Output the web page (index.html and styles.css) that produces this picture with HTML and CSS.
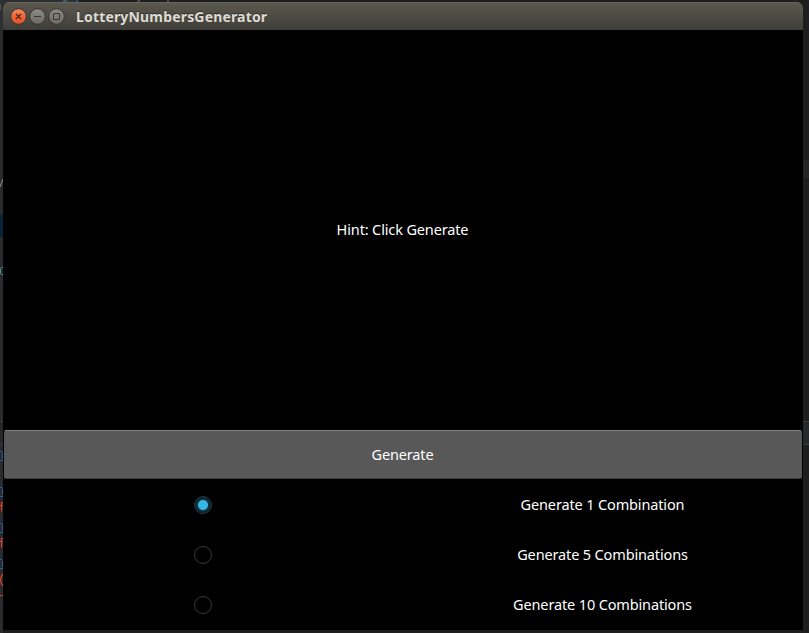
FILE: index.html
```html
<!DOCTYPE html>
<html lang="en">
<head>
<meta charset="utf-8">
<title>LotteryNumbersGenerator</title>
<link rel="stylesheet" href="styles.css">
</head>
<body>
<div class="editor" aria-hidden="true">
  <div class="tabs"></div>
  <div class="selection"></div>
  <div class="panel"></div>
  <div class="rail"></div>
  <svg class="code" width="809" height="633" viewBox="0 0 809 633">
    <path d="M0 4v6M66 0v2M140 0l-3 2M168 0v2" stroke="#777c80"/>
    <path d="M63 2l2-2M76 2l2-2" stroke="#2f6b9e" stroke-width="1.5"/>
    <path d="M0 187l3-8" stroke="#8b8f91"/>
    <path d="M3 267.500h-1.500l-1 1v5l1 1h1.500" fill="none" stroke="#45958c"/>
    <g fill="none" stroke="#2461a8">
      <path d="M0 451.500h1.500l1 1v6.500M0 460.500h3"/>
      <path d="M0 487.500h1.500l1 1v6.500M0 496.500h3"/>
      <path d="M0 523.500h1.500l1 1v6.500M0 532.500h3"/>
      <path d="M0 559.500h1.500l1 1v6.500M0 568.500h3"/>
    </g>
    <g fill="none" stroke="#d0402d" stroke-width="1.200">
      <path d="M3 502.500h-1.500v9M0 505.500h3"/>
      <path d="M3 538.500h-1.500v9M0 541.500h3"/>
      <path d="M3 574q-5 6 0 12M0 595.500h3"/>
    </g>
  </svg>
</div>
<main class="window">
  <header class="titlebar">
    <svg class="controls" width="56" height="20" viewBox="0 0 56 20">
      <defs>
        <linearGradient id="close" x2="0" y2="1"><stop stop-color="#f58b64"/><stop offset=".55" stop-color="#ec6236"/><stop offset="1" stop-color="#e5532a"/></linearGradient>
        <linearGradient id="gray" x2="0" y2="1"><stop stop-color="#8d8c83"/><stop offset="1" stop-color="#6b6a63"/></linearGradient>
      </defs>
      <g stroke="#35342f">
        <circle cx="8.500" cy="10.500" r="7.800" fill="url(#close)"/>
        <circle cx="27.500" cy="10.500" r="7.800" fill="url(#gray)"/>
        <circle cx="46.500" cy="10.500" r="7.800" fill="url(#gray)"/>
      </g>
      <path d="M6 8l5 5M11 8l-5 5" stroke="#542414" stroke-width="1.300"/>
      <path d="M24 10.500h7M43.500 7.500h6v6h-6z" fill="none" stroke="#383732"/>
    </svg>
    <h1 class="title">LotteryNumbersGenerator</h1>
  </header>
  <section class="output"><span class="hint">Hint: Click Generate</span></section>
  <button class="generate"><span class="action">Generate</span></button>
  <form class="options">
    <label class="option"><span class="radio checked"></span><span class="label">Generate 1 Combination</span></label>
    <label class="option"><span class="radio"></span><span class="label">Generate 5 Combinations</span></label>
    <label class="option"><span class="radio"></span><span class="label">Generate 10 Combinations</span></label>
  </form>
</main>
</body>
</html>
```
FILE: styles.css
```css
* { box-sizing: border-box; }
body {
  margin: 0;
  width: 809px;
  height: 633px;
  padding: 2px 6px 3px 3px;
  overflow: hidden;
  background: #1e1e1e;
  font-family: "Noto Sans", "Open Sans", sans-serif;
}
.editor, .editor div, .code { position: absolute; }
.editor { inset: 0; background: linear-gradient(90deg, #292b2d 3px, #1e1e1e 3px); }
.editor .tabs { top: 0; left: 0; width: 75px; height: 30px; background: #2d3033; }
.editor .selection { top: 215px; left: 0; width: 3px; height: 22px; background: #0a2237; }
.editor .panel { top: 421px; left: 0; width: 809px; height: 24px; background: #26282b; border: solid #393b3d; border-width: 1px 0; }
.editor .rail { top: 160px; left: 803px; width: 6px; height: 18px; background: #252525; }
.code { inset: 0; }
.window {
  position: relative;
  width: 800px;
  height: 628px;
  display: flex;
  flex-direction: column;
  background: #000;
  border-radius: 6px 6px 0 0;
  overflow: hidden;
  color: #fff;
}
.titlebar {
  height: 28px;
  flex: none;
  display: flex;
  align-items: center;
  padding-left: 7px;
  background: linear-gradient(#5b594f, #3e3d38);
  box-shadow: inset 0 1px #68665b;
}
.controls { flex: none; margin-top: -1px; }
.title {
  margin: 0 0 0 10px;
  padding-top: 2px;
  font: bold 14px/28px "Noto Sans", sans-serif;
  letter-spacing: .17px;
  color: #dfdbd2;
  text-shadow: 0 -1px #302f2b;
}
.output { height: 400px; display: flex; align-items: center; justify-content: center; }
.hint, .action, .label {
  font-size: 14.5px;
  line-height: 20px;
  letter-spacing: -.14px;
  margin-right: 1px;
  padding-bottom: 2px;
  white-space: nowrap;
}
.action { display: inline-block; }
.generate {
  height: 50px;
  padding: 1px 0 0;
  margin: 0;
  border: solid #000;
  border-width: 0 1px 1px;
  border-radius: 3px;
  background: linear-gradient(#858585 1px, #585858 1px, #585858 48px, #3b3b3b 48px);
  color: #fff;
  font-family: inherit;
}
.options { margin: 0; height: 150px; display: grid; grid-template-rows: repeat(3, 50px); }
.option { display: grid; grid-template-columns: 400px 400px; align-items: center; justify-items: center; }
.radio { width: 18px; height: 18px; border: 1px solid #383838; border-radius: 50%; }
.checked {
  border-color: #30383b;
  background: radial-gradient(circle, #38b5e5 0 4.5px, #0d394a 5.5px, #071b23 8px);
}
```
